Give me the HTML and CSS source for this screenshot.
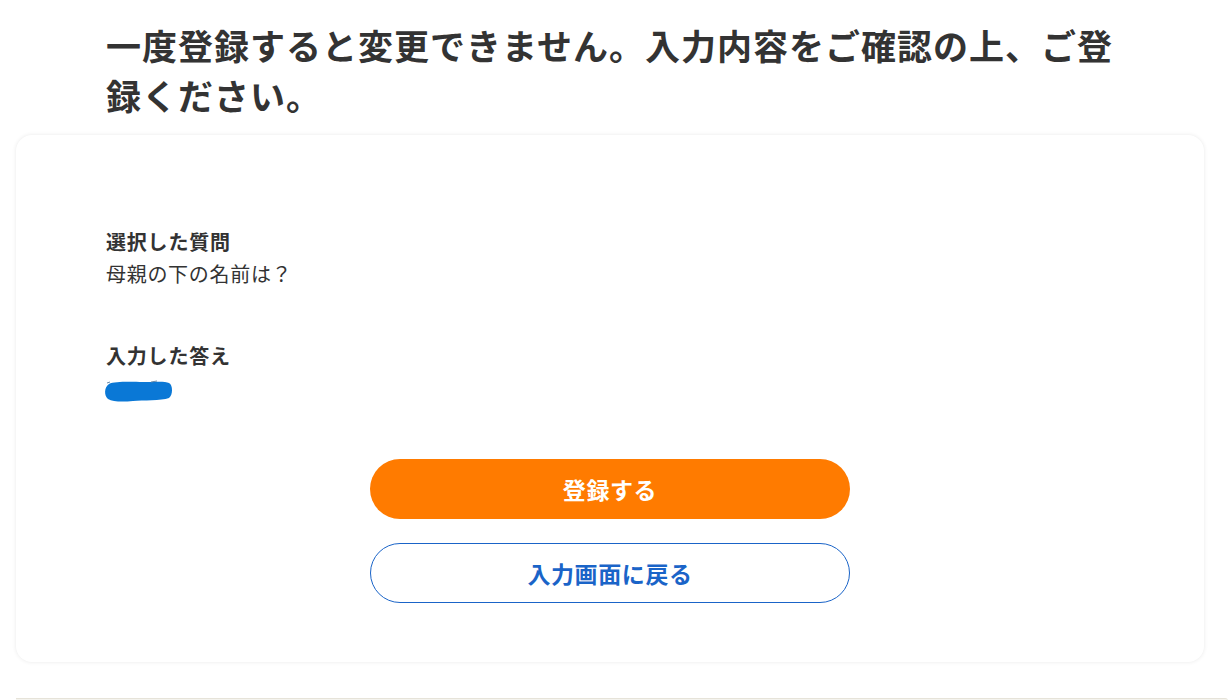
FILE: index.html
```html
<!DOCTYPE html>
<html lang="ja">
<head>
<meta charset="utf-8">
<title>確認</title>
<link rel="stylesheet" href="styles.css">
</head>
<body>
<div class="page">
  <h1 class="title">一度登録すると変更できません。入力内容をご確認の上、ご登録ください。</h1>
  <section class="card">
    <dl class="fields">
      <div class="field">
        <dt class="label">選択した質問</dt>
        <dd class="value">母親の下の名前は？</dd>
      </div>
      <div class="field">
        <dt class="label">入力した答え</dt>
        <dd class="value">
          <svg class="redact" width="72" height="28" viewBox="0 0 72 28" aria-hidden="true">
            <path d="M6 9 C12 6 30 7 40 7 C52 7 62 6 66 8 C70 10 70 20 66 23 C58 26 40 25 30 26 C20 27 10 27 5 24 C1 21 1 12 6 9 Z" fill="#0a78d6"/>
            <path d="M4 8 L7 7" stroke="#6a8aa8" stroke-width="1"/>
            <path d="M48 7 L54 6" stroke="#6a8aa8" stroke-width="1"/>
          </svg>
        </dd>
      </div>
    </dl>
    <div class="actions">
      <button class="btn btn-primary" type="button">登録する</button>
      <button class="btn btn-outline" type="button">入力画面に戻る</button>
    </div>
  </section>
  <div class="footer-edge"></div>
</div>
</body>
</html>
```
FILE: styles.css
```css
* { box-sizing: border-box; }
html, body { margin: 0; padding: 0; background: #fff; }
body {
  font-family: "Noto Sans CJK JP", "Noto Sans", sans-serif;
  color: #333;
}
.page {
  padding: 20px 28px 0 16px;
  display: flex;
  flex-direction: column;
}
.title {
  margin: 0;
  padding: 0 78px 0 90px;
  font-size: 35px;
  line-height: 50px;
  letter-spacing: 1px;
  font-weight: 700;
  color: #333;
}
.card {
  margin-top: 15px;
  background: #fff;
  border-radius: 16px;
  box-shadow: 0 0 4px rgba(0, 0, 0, 0.09);
  padding: 91px 90px 59px;
}
.fields {
  margin: 0;
  display: flex;
  flex-direction: column;
  gap: 50px;
}
.field { display: flex; flex-direction: column; }
.label {
  font-size: 20px;
  line-height: 32px;
  font-weight: 700;
  letter-spacing: 0.8px;
}
.value {
  margin: 0;
  font-size: 20px;
  line-height: 32px;
  letter-spacing: 0.7px;
  height: 32px;
}
.redact { display: block; margin-left: -3px; margin-top: 3px; }
.actions {
  margin-top: 55px;
  display: flex;
  flex-direction: column;
  align-items: center;
  gap: 24px;
}
.btn {
  width: 480px;
  height: 60px;
  border-radius: 30px;
  font-family: inherit;
  font-size: 23px;
  font-weight: 700;
  letter-spacing: 0.6px;
  cursor: pointer;
}
.btn-primary {
  background: #ff7b00;
  color: #fff;
  border: none;
}
.btn-outline {
  background: #fff;
  color: #1a64c8;
  border: 1px solid #1a64c8;
}
.footer-edge {
  margin-top: 36px;
  height: 3px;
  margin-right: -24px;
  border-top: 1px solid #e6e3d9;
  border-top-right-radius: 6px;
  background: #f4f3ee;
}
```
